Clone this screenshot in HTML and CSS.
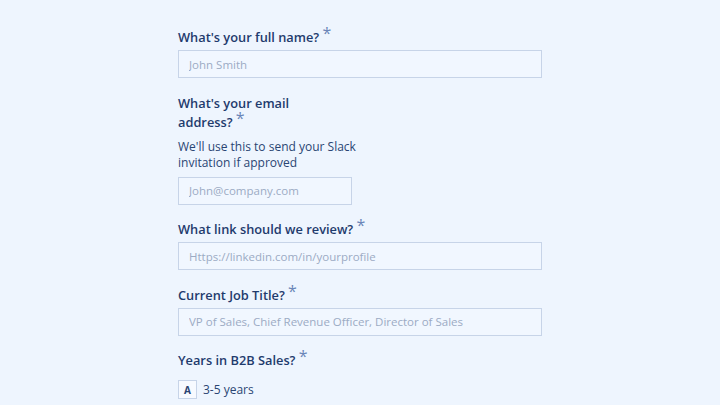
FILE: index.html
```html
<!DOCTYPE html>
<html lang="en">

<head>
  <meta charset="UTF-8">
  <meta name="viewport" content="width=device-width, initial-scale=1.0">
  <title>Application Form</title>
  <link rel="stylesheet" href="styles.css">
</head>

<body>
  <form class="form">
    <div class="field">
      <label class="label" for="name">What's your full name? <span class="req">*</span></label>
      <input class="input" id="name" type="text" placeholder="John Smith">
    </div>

    <div class="field">
      <label class="label narrow" for="email">What's your email address? <span class="req">*</span></label>
      <p class="hint">We'll use this to send your Slack invitation if approved</p>
      <input class="input narrow" id="email" type="email" placeholder="John@company.com">
    </div>

    <div class="field">
      <label class="label" for="link">What link should we review? <span class="req">*</span></label>
      <input class="input" id="link" type="text" placeholder="Https://linkedin.com/in/yourprofile">
    </div>

    <div class="field">
      <label class="label" for="title">Current Job Title? <span class="req">*</span></label>
      <input class="input" id="title" type="text" placeholder="VP of Sales, Chief Revenue Officer, Director of Sales">
    </div>

    <div class="field">
      <div class="label">Years in B2B Sales? <span class="req">*</span></div>
      <div class="options">
        <div class="option"><span class="key">A</span> 3-5 years</div>
      </div>
    </div>
  </form>
</body>

</html>
```

FILE: styles.css
```css
body {
  margin: 0;
  padding-top: 28px;
  background-color: #eef5fe;
  font-family: "Open Sans", Arial, sans-serif;
  color: #1f3b6d;
}

.form {
  width: 364px;
  margin-left: 178px;
  display: flex;
  flex-direction: column;
  gap: 15.5px;
}

.field {
  display: flex;
  flex-direction: column;
  align-items: flex-start;
}

.label {
  font-size: 12.8px;
  font-weight: 600;
  line-height: 19px;
  margin-bottom: 3px;
  width: 100%;
}

.label.narrow {
  width: 130px;
}

.req {
  color: #6a86b8;
  font-size: 16px;
  font-weight: 400;
  vertical-align: 3px;
  line-height: 0;
}

.hint {
  margin: 4px 0 6px;
  width: 182px;
  font-size: 12px;
  line-height: 16px;
  color: #2a4573;
}

.input {
  box-sizing: border-box;
  width: 364px;
  height: 28px;
  margin: 0;
  padding: 0 10px;
  border: 1px solid #c7d4e8;
  background-color: #f1f7ff;
  font-family: inherit;
  font-size: 11.5px;
  color: #1f3b6d;
  outline: none;
}

.input.narrow {
  width: 174px;
}

.input::placeholder {
  color: #9cabc4;
}

.options {
  margin-top: 7px;
}

.option {
  display: flex;
  align-items: center;
  gap: 6px;
  font-size: 12px;
  color: #2a4573;
}

.key {
  box-sizing: border-box;
  width: 19px;
  height: 19px;
  display: flex;
  align-items: center;
  justify-content: center;
  border: 1px solid #c7d4e8;
  background-color: #f7faff;
  font-size: 10px;
  font-weight: 700;
}
```
